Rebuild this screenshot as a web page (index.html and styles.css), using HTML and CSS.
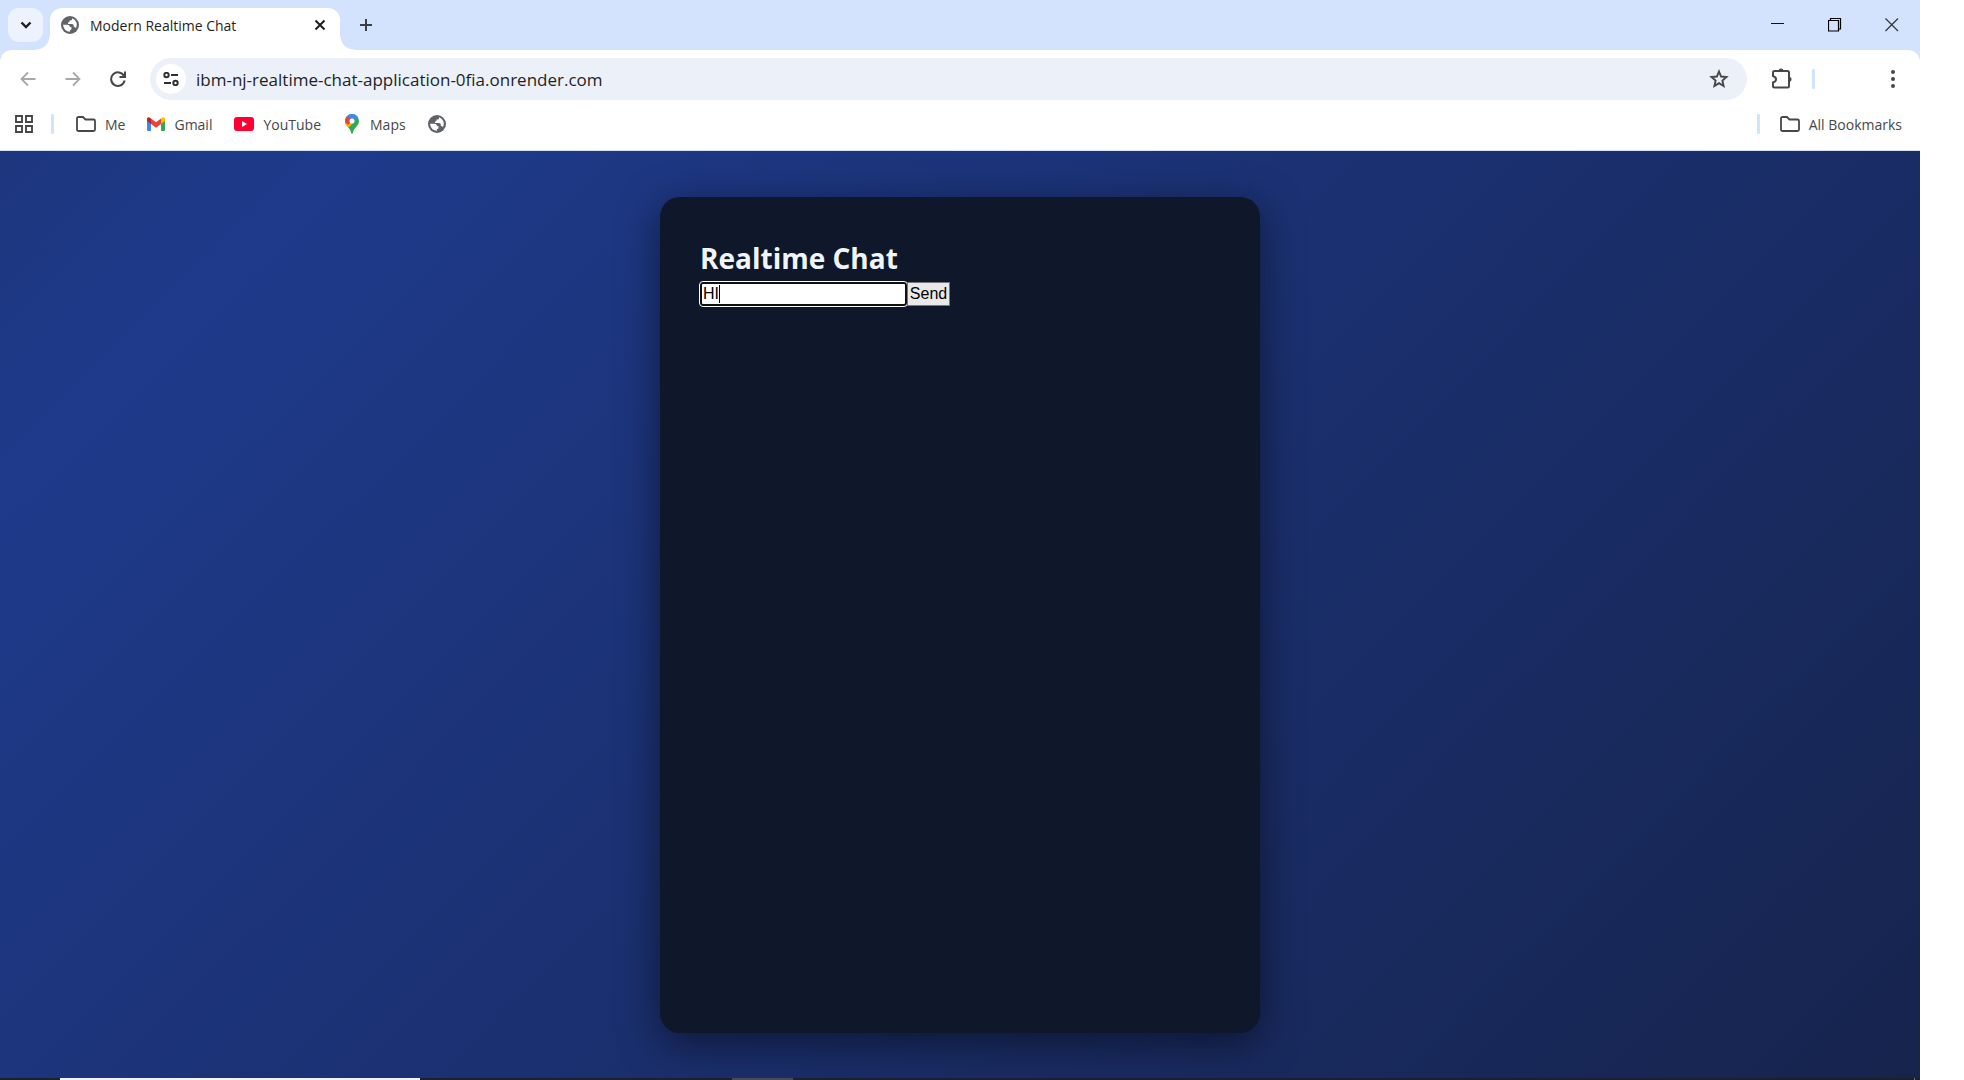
FILE: index.html
```html
<!DOCTYPE html>
<html lang="en">
<head>
<meta charset="utf-8">
<title>Modern Realtime Chat</title>
<link rel="stylesheet" href="styles.css">
</head>
<body>
<svg class="defs" aria-hidden="true">
  <symbol id="globe" viewBox="0 0 18 18">
    <circle cx="9" cy="9" r="9" fill="#5f6368"/>
    <path d="M2 8.800H6.500Q8.500 8.800 8.800 10.500 9 11.300 10.500 11.300V13Q10.500 14 9 14V15.800Q3 15.500 2 8.800Z" fill="#fff"/>
    <path d="M11 2.300V3.200Q11 4.500 9.600 4.500H8.500V5.500Q8.500 6.500 7 6.500V8H11Q12.500 8 12.800 9.500V11Q14.500 11 15 12.300 16.500 9.500 15.500 6.500 14 3.200 11 2.300Z" fill="#fff"/>
  </symbol>
  <symbol id="folder" viewBox="0 0 20 16">
    <path d="M1 13.500V2.500Q1 1 2.500 1H7L9.500 3.500H17.500Q19 3.500 19 5V13.500Q19 15 17.500 15H2.500Q1 15 1 13.500Z" fill="none" stroke="#474747" stroke-width="1.800"/>
  </symbol>
</svg>
<div class="screen">
  <header class="tabs">
    <button class="search" aria-label="Search tabs"><svg width="12" height="8" viewBox="0 0 12 8"><path d="M1.500 1.500 6 6 10.500 1.500" fill="none" stroke="#1f1f1f" stroke-width="2.400"/></svg></button>
    <div class="tab">
      <svg width="18" height="18"><use href="#globe"/></svg>
      <span class="title">Modern Realtime Chat</span>
      <button aria-label="Close tab"><svg width="12" height="12" viewBox="0 0 12 12"><path d="M1.500 1.500 10.500 10.500M10.500 1.500 1.500 10.500" stroke="#1f1f1f" stroke-width="2"/></svg></button>
    </div>
    <button class="new" aria-label="New tab"><svg width="14" height="14" viewBox="0 0 14 14"><path d="M7 1V13M1 7H13" stroke="#3c4043" stroke-width="2"/></svg></button>
    <div class="window">
      <button aria-label="Minimize"><svg width="14" height="14" viewBox="0 0 14 14"><path d="M0 5.500H13" stroke="#111"/></svg></button>
      <button aria-label="Restore"><svg width="14" height="14" viewBox="0 0 14 14"><path d="M.5 2.500H10.500V13H.5ZM2.500 2.500V.5H12.500V11H10.500" fill="none" stroke="#000" stroke-width="1.200"/></svg></button>
      <button aria-label="Close"><svg width="14" height="14" viewBox="0 0 14 14"><path d="M.5 .5 13 13M13 .5 .5 13" stroke="#333" stroke-width="1.200"/></svg></button>
    </div>
  </header>
  <div class="toolbar">
    <nav class="nav">
      <button aria-label="Back"><svg width="16" height="16" viewBox="0 0 16 16"><path d="M15.500 8H2M8 1.500 1.500 8 8 14.500" fill="none" stroke="#a8a8a8" stroke-width="1.800"/></svg></button>
      <button aria-label="Forward"><svg width="16" height="16" viewBox="0 0 16 16"><path d="M.5 8H14M8 1.500 14.500 8 8 14.500" fill="none" stroke="#a8a8a8" stroke-width="1.800"/></svg></button>
      <button aria-label="Reload"><svg width="16" height="16" viewBox="0 0 16 16"><path d="M14 5A6.800 6.800 0 1 0 14.600 9.500M15 .5V6H9.500" fill="none" stroke="#474747" stroke-width="2"/></svg></button>
    </nav>
    <div class="address">
      <button class="site" aria-label="Site information"><svg width="16" height="14" viewBox="0 0 16 14"><g fill="none" stroke="#303030" stroke-width="2"><circle cx="3.500" cy="3" r="2.200"/><path d="M8 3H15M1 11H8"/><circle cx="12.500" cy="11" r="2.200"/></g></svg></button>
      <input class="url" aria-label="Address" value="ibm-nj-realtime-chat-application-0fia.onrender.com">
      <button class="star" aria-label="Bookmark this tab"><svg width="20" height="20" viewBox="0 0 20 20"><path d="M10 2.500 12.100 7.500 17.500 8 13.400 11.600 14.600 17 10 14.100 5.400 17 6.600 11.600 2.500 8 7.900 7.500Z" fill="none" stroke="#474747" stroke-width="1.900"/></svg></button>
    </div>
    <button class="ext" aria-label="Extensions"><svg width="22" height="22" viewBox="0 0 22 22"><path d="M2 4.500Q2 3 3.500 3H16.500Q18 3 18 4.500V18Q18 19.500 16.500 19.500H3.500Q2 19.500 2 18V14.500Q5 13.500 5 11.200 5 9 2 8Z" fill="none" stroke="#474747" stroke-width="2"/><path d="M7.500 3A2.500 2.500 0 0 1 12.500 3ZM18 8.700A2.500 2.500 0 0 1 18 13.700Z" fill="#474747"/></svg></button>
    <i class="bar"></i>
    <button class="more" aria-label="Menu"><svg width="4" height="18" viewBox="0 0 4 18"><g fill="#474747"><circle cx="2" cy="2" r="2"/><circle cx="2" cy="9" r="2"/><circle cx="2" cy="16" r="2"/></g></svg></button>
  </div>
  <nav class="bookmarks">
    <button aria-label="Apps"><svg width="18" height="18" viewBox="0 0 18 18"><path d="M1 1H7V7H1ZM11 1H17V7H11ZM1 11H7V17H1ZM11 11H17V17H11Z" fill="none" stroke="#474747" stroke-width="1.900"/></svg></button>
    <i class="bar"></i>
    <a href="#"><svg width="20" height="16"><use href="#folder"/></svg>Me</a>
    <a href="#"><svg width="18" height="14" viewBox="0 0 18 14"><path d="M0 2V13Q0 14 1 14H4V5Z" fill="#4285f4"/><path d="M18 2V13Q18 14 17 14H14V5Z" fill="#34a853"/><path d="M14 1.500 16 .3Q18 0 18 2V4L14 7Z" fill="#fbbc04"/><path d="M4 1.500 9 5.200 14 1.500V7L9 10.800 4 7Z" fill="#ea4335"/><path d="M4 1.500 2 .3Q0 0 0 2V4L4 7Z" fill="#c5221f"/></svg>Gmail</a>
    <a href="#"><svg width="20" height="14" viewBox="0 0 20 14"><rect width="20" height="14" rx="3" fill="#ff0033"/><path d="M8 4 13 7 8 10Z" fill="#fff"/></svg>YouTube</a>
    <a href="#"><svg width="18" height="20" viewBox="-2 0 18 20"><clipPath id="pin"><path d="M7 0A7 7 0 0 1 14 7C14 12 9 13 7.800 19Q7 21 6.200 19C5 13 0 12 0 7A7 7 0 0 1 7 0Z"/></clipPath><g clip-path="url(#pin)"><path d="M0 0H14V20H0Z" fill="#34a853"/><path d="M0 16V5L7 7 8 9 2 15Z" fill="#fbbc04"/><path d="M0 0 7 7 3 11 0 8Z" fill="#ea4335"/><path d="M2 2 5 -1H14L14 3 7 7Z" fill="#4285f4"/></g><circle cx="7" cy="7" r="2.500" fill="#fff"/></svg>Maps</a>
    <a href="#" aria-label="Website"><svg width="18" height="18"><use href="#globe"/></svg></a>
    <div class="all"><i class="bar"></i><a href="#"><svg width="20" height="16"><use href="#folder"/></svg>All Bookmarks</a></div>
  </nav>
  <main class="page">
    <section class="chat">
      <h1>Realtime Chat</h1>
      <form class="form">
        <input class="message" aria-label="Message" value="HI" autofocus>
        <i class="caret"></i>
        <button type="button" class="send">Send</button>
      </form>
    </section>
  </main>
  <footer class="taskbar"><i class="find"></i><i class="active"></i><i class="edge"></i></footer>
</div>
</body>
</html>
```
FILE: styles.css
```css
* { box-sizing: border-box; margin: 0; padding: 0; }
body { background: #fff; font-family: "Noto Sans", sans-serif; }
.defs { position: absolute; width: 0; height: 0; }
.screen { display: flex; flex-direction: column; min-height: 100vh; margin-right: 44px; background: linear-gradient(#d3e3fd 0 60px, #fff 60px); }
button { border: 0; background: none; font: inherit; display: flex; align-items: center; justify-content: center; }
svg { display: block; flex: none; }
.tabs { display: flex; height: 50px; padding: 8px 21px 0 8px; background: #d3e3fd; }
.search { width: 35px; height: 34px; border-radius: 11px; background: #ecf2fe; }
.tab { position: relative; display: flex; align-items: center; width: 290px; margin-left: 7px; padding: 0 14px 8px 11px; border-radius: 12px 12px 0 0; background: #fff; }
.tab::before, .tab::after { content: ""; position: absolute; bottom: 0; width: 14px; height: 14px; }
.tab::before { left: -14px; background: radial-gradient(circle at 0 0, transparent 13px, #fff 14px); }
.tab::after { right: -14px; background: radial-gradient(circle at 100% 0, transparent 13px, #fff 14px); }
.title { flex: 1; margin-left: 11px; font: 14px "Open Sans", sans-serif; color: #1f1f1f; }
.new { width: 36px; height: 34px; margin-left: 8px; }
.window { display: flex; gap: 43px; height: 34px; margin-left: auto; }
.toolbar { display: flex; align-items: center; height: 58px; padding: 0 25px 0 20px; background: #fff; border-radius: 12px 12px 0 0; }
.nav { display: flex; gap: 29px; width: 130px; }
.address { display: flex; align-items: center; flex: 1; height: 42px; padding: 0 18px 0 6px; border-radius: 21px; background: #ebf0f9; }
.site { width: 30px; height: 30px; border-radius: 50%; background: #fff; }
.url { flex: 1; min-width: 0; margin-left: 10px; border: 0; outline: 0; background: none; font: 17px "Open Sans", sans-serif; color: #1f1f1f; }
.ext { margin-left: 24px; }
.bar { flex: none; width: 3px; height: 20px; border-radius: 1px; background: #d3e3fd; }
.toolbar .bar { margin: 0 76px 0 19px; }
.bookmarks { display: flex; align-items: center; height: 43px; padding: 0 18px 10px 15px; background: #fff; border-bottom: 1px solid #d3e3fd; }
.bookmarks a { display: flex; align-items: center; gap: 9px; margin-left: 22px; font: 14px "Open Sans", sans-serif; color: #474747; text-decoration: none; }
.bookmarks > .bar { margin-left: 18px; }
.all { display: flex; align-items: center; margin-left: auto; }
.all a { margin-left: 20px; }
.page { flex: 1; display: flex; padding: 46px 20px 45px; background: linear-gradient(135deg, #1d367e 0%, #1e3a8a 12%, #1a2e6b 58%, #16244d 100%); }
.chat { width: 600px; max-width: 100%; margin: 0 auto; padding: 40px; border-radius: 20px; background: #0f172a; box-shadow: 0 10px 40px rgba(0, 0, 0, .5); }
h1 { font: 700 28px/42px "Open Sans", sans-serif; color: #f1f5f9; }
.form { position: relative; display: flex; height: 24px; margin-top: 3px; font-family: "Liberation Sans", Arial, sans-serif; }
.message { width: 207px; padding: 0 1px; border: 2px solid #101010; border-radius: 3px; outline: 1px solid #fff; background: #fff; font: 16px "Liberation Sans", Arial, sans-serif; color: #000; caret-color: transparent; }
.caret { position: absolute; left: 19px; top: 3px; width: 1px; height: 18px; background: #000; }
.send { width: 43px; border: 1px solid #767676; background: #e9e9e9; font-size: 16px; color: #000; }
.taskbar { display: flex; height: 2px; padding-left: 60px; background: #1d2029; }
.find { width: 360px; background: #f2f2f2; }
.active { width: 61px; margin-left: 312px; background: #4a4c52; }
.edge { width: 1px; margin: 0 5px 0 auto; background: #777; }
```
